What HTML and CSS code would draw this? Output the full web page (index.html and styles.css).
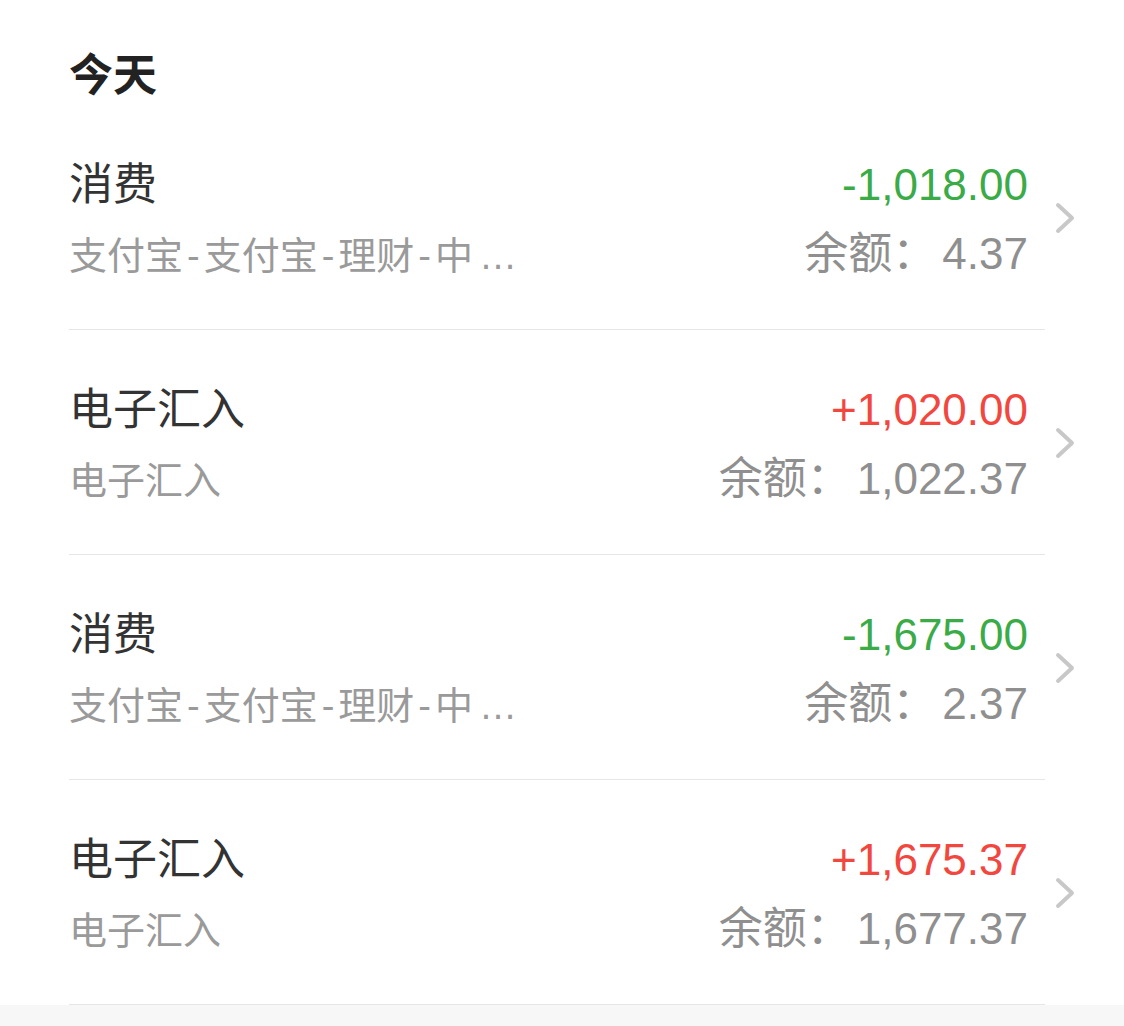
FILE: index.html
```html
<!DOCTYPE html>
<html>
<head>
  <meta charset="utf-8">
  <title>账户明细</title>
  <link rel="stylesheet" href="styles.css">
</head>
<body>

  <div class="page">
    <h2 class="day">今天</h2>

    <ul class="list">
      <li class="item">
        <div class="item-body">
          <div class="line">
            <span class="name">消费</span>
            <span class="amount out">-1,018.00</span>
          </div>
          <div class="line sub">
            <span class="desc">支付宝<i class="dash">-</i>支付宝<i class="dash">-</i>理财<i class="dash">-</i>中<span class="dots">…</span></span>
            <span class="balance"><span class="label">余额：</span>4.37</span>
          </div>
        </div>
        <span class="chev"><svg width="20" height="32" viewBox="0 0 20 32"><polyline points="3,3 17,16 3,29" /></svg></span>
      </li>

      <li class="item">
        <div class="item-body">
          <div class="line">
            <span class="name">电子汇入</span>
            <span class="amount in">+1,020.00</span>
          </div>
          <div class="line sub">
            <span class="desc">电子汇入</span>
            <span class="balance"><span class="label">余额：</span>1,022.37</span>
          </div>
        </div>
        <span class="chev"><svg width="20" height="32" viewBox="0 0 20 32"><polyline points="3,3 17,16 3,29" /></svg></span>
      </li>

      <li class="item">
        <div class="item-body">
          <div class="line">
            <span class="name">消费</span>
            <span class="amount out">-1,675.00</span>
          </div>
          <div class="line sub">
            <span class="desc">支付宝<i class="dash">-</i>支付宝<i class="dash">-</i>理财<i class="dash">-</i>中<span class="dots">…</span></span>
            <span class="balance"><span class="label">余额：</span>2.37</span>
          </div>
        </div>
        <span class="chev"><svg width="20" height="32" viewBox="0 0 20 32"><polyline points="3,3 17,16 3,29" /></svg></span>
      </li>

      <li class="item">
        <div class="item-body">
          <div class="line">
            <span class="name">电子汇入</span>
            <span class="amount in">+1,675.37</span>
          </div>
          <div class="line sub">
            <span class="desc">电子汇入</span>
            <span class="balance"><span class="label">余额：</span>1,677.37</span>
          </div>
        </div>
        <span class="chev"><svg width="20" height="32" viewBox="0 0 20 32"><polyline points="3,3 17,16 3,29" /></svg></span>
      </li>
    </ul>
  </div>

</body>
</html>
```

FILE: styles.css
```css
body {
  margin: 0;
  background: #f7f7f7;
  font-family: "Liberation Sans", "Noto Sans CJK SC", sans-serif;
}
.page {
  background: white;
}
.day {
  margin: 0;
  padding: 46px 0 0 69px;
  height: 59px;
  font-size: 44px;
  line-height: 60px;
  font-weight: bold;
  color: #222;
}
.list {
  list-style: none;
  margin: 0;
  padding: 0 0 0 69px;
}
.item {
  display: flex;
  align-items: center;
}
.item-body {
  width: 976px;
  height: 225px;
  box-sizing: border-box;
  padding: 50px 17px 0 0;
  border-bottom: 1px solid #e6e6e6;
  display: flex;
  flex-direction: column;
  gap: 9px;
}
.line {
  display: flex;
  justify-content: space-between;
  align-items: baseline;
  font-size: 44px;
  line-height: 60px;
}
.name {
  color: #333;
}
.amount.out {
  color: #3aab47;
}
.amount.in {
  color: #f2473f;
}
.desc {
  font-size: 38px;
  color: #9a9a9a;
}
.dash {
  font-style: normal;
  margin: 0 4px;
}
.dots {
  margin-left: 6px;
}
.balance {
  color: #8f8f8f;
}
.label {
  margin-right: 6px;
}
.chev {
  margin-left: 10px;
  display: flex;
}
.chev polyline {
  fill: none;
  stroke: #c8c8c8;
  stroke-width: 4;
  stroke-linecap: round;
  stroke-linejoin: round;
}
```
